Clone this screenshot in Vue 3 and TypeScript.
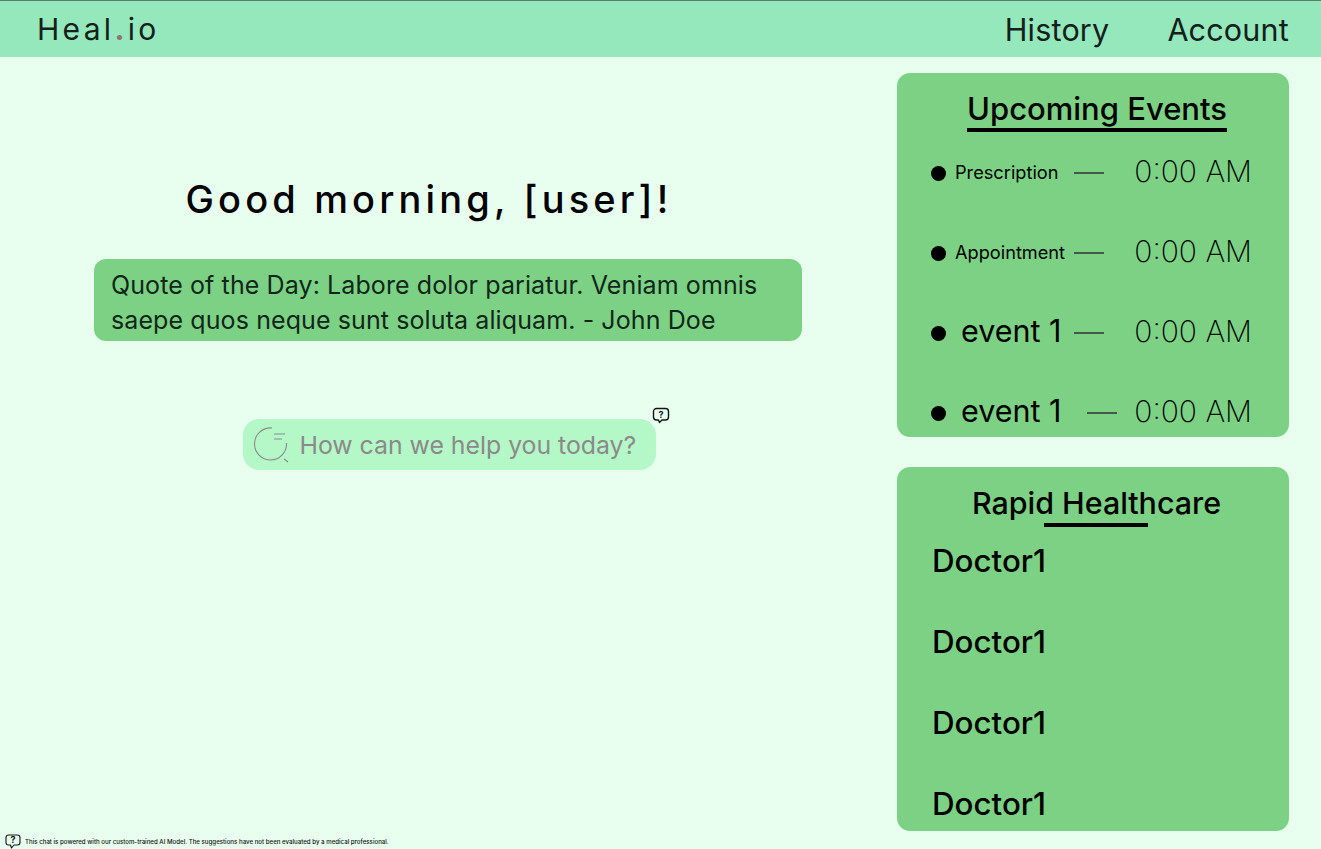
<script setup lang="ts">
interface EventRow { label: string; small: boolean; dashGap: number; }
const events: EventRow[] = [
  { label: 'Prescription', small: true, dashGap: 16 },
  { label: 'Appointment', small: true, dashGap: 9 },
  { label: 'event 1', small: false, dashGap: 12 },
  { label: 'event 1', small: false, dashGap: 25 },
];
const doctors: string[] = ['Doctor1', 'Doctor1', 'Doctor1', 'Doctor1'];
</script>

<template>
  <div class="page">
    <header class="topbar">
      <div class="logo">Heal<span class="dot">.</span>io</div>
      <nav class="nav">
        <span>History</span>
        <span>Account</span>
      </nav>
    </header>
    <main class="content">
      <section class="left">
        <h1 class="greet">Good morning, [user]!</h1>
        <p class="quote">Quote of the Day: Labore dolor pariatur. Veniam omnis saepe quos neque sunt soluta aliquam. - John Doe</p>
        <div class="search">
          <svg class="search-icon" width="36" height="37" viewBox="0 0 36 37" fill="none" stroke="#8a8a8a" stroke-width="1.1">
            <path d="M18 2 A16 16 0 1 0 32.5 17" />
            <path d="M20 8 H31 M20 13 H28" />
            <path d="M30 33 L34 36" />
          </svg>
          <span class="placeholder">How can we help you today?</span>
          <svg class="help-bubble" width="18" height="18" viewBox="0 0 18 18" fill="none">
            <path d="M4.5 1.5 H13.5 A3 3 0 0 1 16.5 4.5 V10 A3 3 0 0 1 13.5 13 H10 L7.5 15.5 L6.5 13 H4.5 A3 3 0 0 1 1.5 10 V4.5 A3 3 0 0 1 4.5 1.5 Z" stroke="#111" stroke-width="1.4" stroke-linejoin="round" />
            <text x="9" y="10.5" text-anchor="middle" class="q">?</text>
          </svg>
        </div>
      </section>
      <aside class="right">
        <section class="card events">
          <h2 class="card-title"><span class="u-full">Upcoming Events</span></h2>
          <ul class="rows">
            <li v-for="(e, i) in events" :key="i" class="row">
              <span class="bullet"></span>
              <span :class="e.small ? 'label-small' : 'label-big'">{{ e.label }}</span>
              <span class="dash" :style="{ marginLeft: e.dashGap + 'px' }"></span>
              <span class="time">0:00 AM</span>
            </li>
          </ul>
        </section>
        <section class="card rapid">
          <h2 class="card-title rapid-title">Rapid Healthcare</h2>
          <ul class="doctors">
            <li v-for="(d, i) in doctors" :key="i">{{ d }}</li>
          </ul>
        </section>
      </aside>
    </main>
    <footer class="disclaimer">
      <svg width="16" height="15" viewBox="0 0 16 15" fill="none">
        <path d="M3.5 1 H12.5 A2.5 2.5 0 0 1 15 3.5 V8.5 A2.5 2.5 0 0 1 12.5 11 H9 L6.5 14 L5.5 11 H3.5 A2.5 2.5 0 0 1 1 8.5 V3.5 A2.5 2.5 0 0 1 3.5 1 Z" stroke="#111" stroke-width="1.1" stroke-linejoin="round" />
        <text x="8" y="9" text-anchor="middle" class="q">?</text>
      </svg>
      <span>This chat is powered with our custom-trained AI Model. The suggestions have not been evaluated by a medical professional.</span>
    </footer>
  </div>
</template>

<style>
html, body { margin: 0; background: #e8fff0; }
</style>

<style scoped>
.page {
  position: relative;
  width: 1321px;
  height: 849px;
  overflow: hidden;
  background: #e8fff0;
  font-family: "Inter", "Lato", sans-serif;
  color: #000;
}
.topbar {
  height: 56px;
  box-sizing: content-box;
  border-top: 1px solid #5c7d6b;
  background: #94e8bc;
  display: flex;
  align-items: center;
  justify-content: space-between;
  padding: 0 32px 0 37px;
}
.logo {
  font-size: 30px;
  letter-spacing: 3.3px;
  color: #14201a;
}
.dot { color: #9a6f73; font-weight: 700; }
.nav {
  display: flex;
  gap: 58px;
  font-size: 30.5px;
  letter-spacing: 0.2px;
  color: #14201a;
}
.content {
  display: flex;
  justify-content: space-between;
  padding: 16px 32px 0 94px;
}
.left {
  width: 708px;
  display: flex;
  flex-direction: column;
  align-items: center;
}
.greet {
  margin: 103px 38px 0 0;
  font-size: 38px;
  font-weight: 500;
  letter-spacing: 4.15px;
  line-height: 46px;
}
.quote {
  margin: 37px 0 0;
  box-sizing: border-box;
  width: 708px;
  height: 82px;
  padding: 9px 17px 0;
  border-radius: 12px;
  background: #7dd184;
  font-size: 25px;
  letter-spacing: 0.1px;
  line-height: 35px;
  color: #10261a;
}
.search {
  position: relative;
  margin: 78px 0 0 2px;
  box-sizing: border-box;
  width: 413px;
  height: 51px;
  display: flex;
  align-items: center;
  gap: 10px;
  padding-left: 11px;
  border-radius: 16px;
  background: #b5f8c8;
}
.search-icon { flex: none; }
.placeholder {
  font-size: 24.8px;
  color: #8a8a8a;
  white-space: nowrap;
}
.help-bubble {
  position: absolute;
  right: -14px;
  top: -12px;
}
.q {
  font-family: "Inter", sans-serif;
  font-size: 9px;
  font-weight: 700;
  fill: #111;
}
.right {
  width: 392px;
  display: flex;
  flex-direction: column;
  gap: 30px;
}
.card {
  position: relative;
  box-sizing: border-box;
  height: 364px;
  border-radius: 13px;
  background: #7dd184;
  overflow: hidden;
}
.card-title {
  margin: 0;
  text-align: center;
  font-size: 31px;
  font-weight: 500;
  line-height: 40px;
  padding: 16px 0 0 8px;
}
.u-full {
  display: inline-block;
  padding: 0 0.5px;
  border-bottom: 4px solid #000;
  line-height: 38px;
}
.rows {
  list-style: none;
  margin: -2px 0 0;
  padding: 0 37px 0 34px;
}
.row {
  height: 80px;
  display: flex;
  align-items: center;
}
.bullet {
  width: 15px;
  height: 15px;
  flex: none;
  border-radius: 50%;
  background: #000;
  margin-top: 6px;
}
.label-small {
  margin-left: 9px;
  font-size: 18.2px;
  white-space: nowrap;
  margin-top: 4px;
}
.label-big {
  margin-left: 15px;
  font-size: 30.5px;
  white-space: nowrap;
}
.dash {
  width: 30px;
  height: 2px;
  background: #45594a;
  flex: none;
  margin-top: 6px;
}
.time {
  margin-left: auto;
  margin-top: 1px;
  font-size: 30px;
  font-weight: 200;
  white-space: nowrap;
}
.rapid-title {
  position: relative;
  font-size: 30.4px;
  padding: 16px 0 0 7px;
}
.rapid-title::after {
  content: "";
  position: absolute;
  left: 147px;
  width: 104px;
  top: 56px;
  height: 4px;
  background: #000;
}
.doctors {
  list-style: none;
  margin: 18px 0 0;
  padding: 0 0 0 35px;
  font-size: 31.3px;
  font-weight: 500;
}
.doctors li { height: 81px; line-height: 40px; }
.disclaimer {
  position: absolute;
  left: 5px;
  bottom: 0;
  height: 15px;
  display: flex;
  align-items: center;
  gap: 4px;
  font-size: 6.14px;
  font-weight: 500;
  color: #111;
}
</style>
